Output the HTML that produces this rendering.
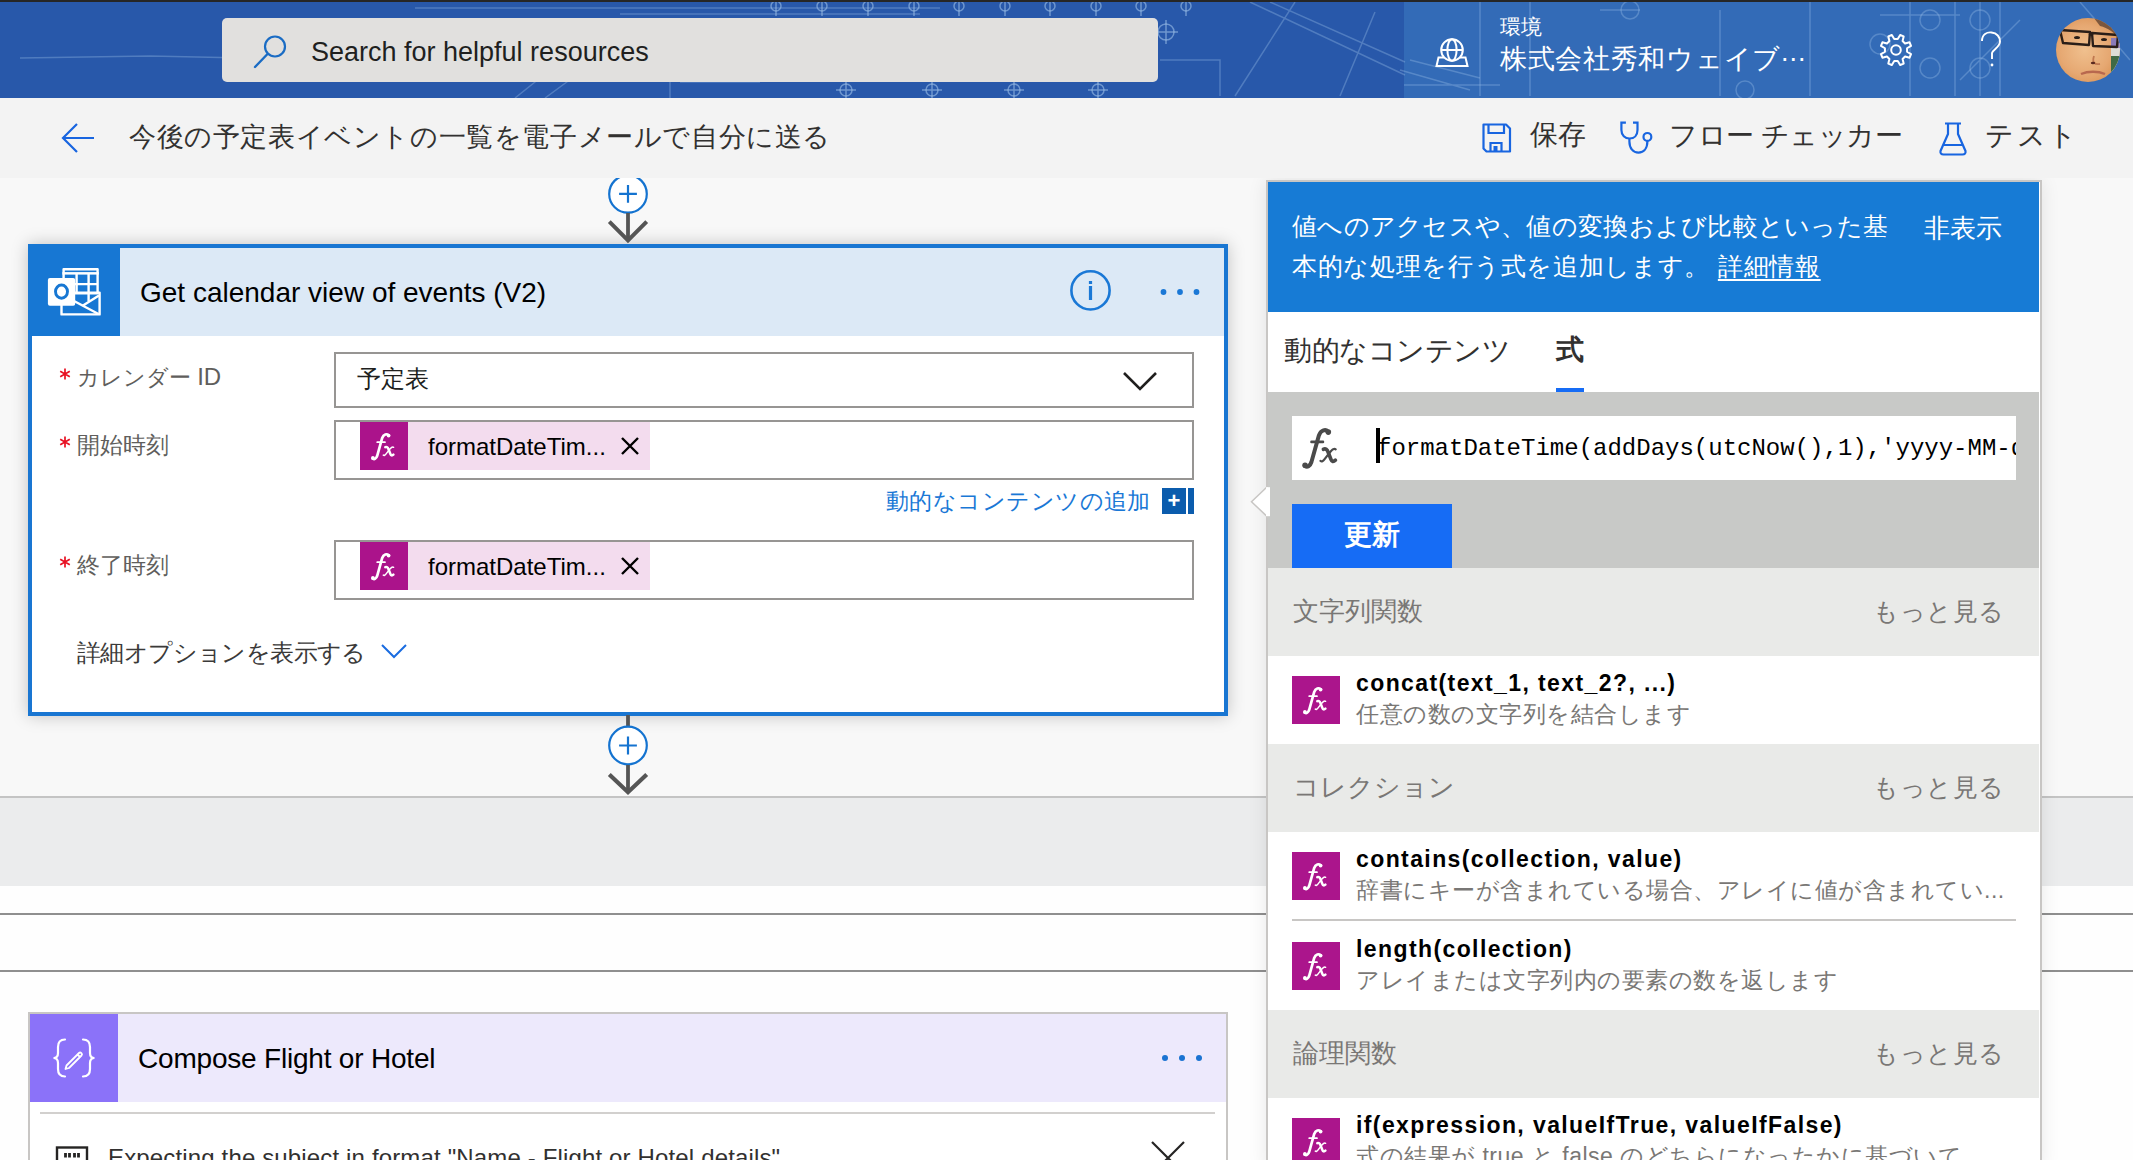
<!DOCTYPE html>
<html lang="ja">
<head>
<meta charset="utf-8">
<style>
*{box-sizing:border-box;margin:0;padding:0}
html,body{width:2133px;height:1160px;overflow:hidden;background:#f8f8f8;font-family:"Liberation Sans",sans-serif;color:#201f1e}
.a{position:absolute}
.t{position:absolute;white-space:nowrap;line-height:1}
svg{position:absolute;overflow:visible}
</style>
</head>
<body>
<svg width="0" height="0" style="position:absolute"><defs>
<symbol id="fx" viewBox="0 0 48 48"><g fill="none" stroke="currentColor" stroke-linecap="round">
<path d="M28.3 13.2 C27 11.6 23.6 11.8 22.2 16 L17.2 33.8 C16.2 36.8 14.4 37.6 12.8 36.6" stroke-width="2.7"/>
<path d="M17.2 20.2 H25" stroke-width="1.7"/>
<path d="M25.3 25.2 C26.8 24.6 27.9 25.4 28.4 27 L30.4 32 C31 33.6 32 33.9 33.4 32.6" stroke-width="2.5"/>
<path d="M33.6 25.3 C32.6 24.5 31.5 25.1 30 26.9 L26.1 31.9 C25.1 33.3 24.1 33.7 23.3 33.1" stroke-width="1.5"/>
</g><circle cx="28.6" cy="13.6" r="1.9" fill="currentColor"/><circle cx="12.9" cy="36" r="1.9" fill="currentColor"/></symbol>
</defs></svg>
<!-- ================= HEADER ================= -->
<div class="a" style="left:0;top:0;width:2133px;height:2px;background:#262626"></div>
<div class="a" id="hdr" style="left:0;top:2px;width:2133px;height:96px;background:#2858aa;overflow:hidden">
<svg style="left:0;top:0" width="2133" height="96" viewBox="0 2 2133 96">
  <rect x="1404" y="0" width="729" height="100" fill="#336bb7"/>
  <g stroke="#9cc0e8" stroke-opacity=".35" fill="none" stroke-width="1.5">
    <path d="M20 58 L150 56 L330 60"/>
    <path d="M415 8 H940 M620 14 H920"/>
    <path d="M515 98 L540 78 M545 98 L575 76 M670 98 V72 H860 M680 82 H760"/>
    <g stroke-opacity=".6">
      <circle cx="776" cy="6" r="5"/><circle cx="822" cy="6" r="5"/><circle cx="868" cy="6" r="5"/><circle cx="914" cy="6" r="5"/><circle cx="959" cy="6" r="5"/><circle cx="1005" cy="6" r="5"/><circle cx="1050" cy="6" r="5"/><circle cx="1096" cy="6" r="5"/><circle cx="1141" cy="6" r="5"/><circle cx="1186" cy="6" r="5"/>
      <circle cx="1166" cy="32" r="8"/><path d="M1166 20 V44 M1154 32 H1178"/><circle cx="846" cy="90" r="6"/><circle cx="932" cy="90" r="6"/><circle cx="1014" cy="90" r="6"/><circle cx="1098" cy="90" r="6"/><path d="M846 80 V98 M932 80 V98 M1014 80 V98 M1098 80 V98 M836 90 H856 M922 90 H942 M1004 90 H1024 M1088 90 H1108"/><path d="M776 2 V16 M822 2 V16 M868 2 V16 M914 2 V16 M959 2 V16 M1005 2 V16 M1050 2 V16 M1096 2 V16 M1141 2 V16 M1186 2 V16"/>
    </g>
    <path d="M1250 2 L1405 75 M1270 2 L1405 62 M1235 96 L1295 2 M1340 96 L1375 12 M1160 60 H1220 V96"/>
    <path d="M1480 2 V96 M1530 2 V96 M1600 10 H1640 M1720 10 V96 M1810 2 V96 M1880 15 H1960 M1910 2 V96 M1955 2 V96 M1980 2 V96 M2000 2 V96 M1960 80 L2020 20 M2080 2 L2130 60"/>
    <circle cx="1630" cy="10" r="9"/><circle cx="1930" cy="20" r="10"/><circle cx="1980" cy="20" r="10"/><circle cx="1930" cy="68" r="10"/><circle cx="1980" cy="68" r="10"/><circle cx="1880" cy="44" r="10"/><circle cx="1745" cy="90" r="9"/>
    <path d="M1400 70 L1470 90 M1410 60 L1480 78 M1404 85 H1500"/>
  </g>
</svg>
</div>
<!-- search -->
<div class="a" style="left:222px;top:18px;width:936px;height:64px;border-radius:5px;background:#e1e0de"></div>
<div class="t" style="left:311px;top:39px;font-size:27px;color:#201f1e">Search for helpful resources</div>
<svg style="left:250px;top:30px" width="40" height="42"><circle cx="25" cy="16.5" r="10" fill="none" stroke="#1a6cc4" stroke-width="2.2"/><path d="M17.5 24 L5 37" stroke="#1a6cc4" stroke-width="2.4" stroke-linecap="round"/></svg>
<svg style="left:1430px;top:30px" width="44" height="42"><circle cx="22" cy="20" r="10.8" fill="none" stroke="#fff" stroke-width="2"/><ellipse cx="22" cy="20" rx="4.6" ry="10.8" fill="none" stroke="#fff" stroke-width="2"/><path d="M11 20 H33" stroke="#fff" stroke-width="2"/><path d="M14 27.5 H8.5 L6.5 36 H37.5 L35.5 27.5 H30" fill="none" stroke="#fff" stroke-width="2"/></svg>
<div class="t" style="left:1500px;top:16px;font-size:21px;color:#fff">環境</div>
<div class="t" style="left:1500px;top:46px;font-size:27px;letter-spacing:.7px;color:#fff">株式会社秀和ウェイブ<span style="position:relative;top:-7px;letter-spacing:1px">...</span></div>
<svg style="left:1876px;top:30px" width="40" height="40" viewBox="-20 -20 40 40"><path id="gear" fill="none" stroke="#fff" stroke-width="2" stroke-linejoin="round" d="M1.75 -11.06 L4.17 -15.03 L7.68 -13.58 L6.58 -9.06 L9.06 -6.58 L13.58 -7.68 L15.03 -4.17 L11.06 -1.75 L11.06 1.75 L15.03 4.17 L13.58 7.68 L9.06 6.58 L6.58 9.06 L7.68 13.58 L4.17 15.03 L1.75 11.06 L-1.75 11.06 L-4.17 15.03 L-7.68 13.58 L-6.58 9.06 L-9.06 6.58 L-13.58 7.68 L-15.03 4.17 L-11.06 1.75 L-11.06 -1.75 L-15.03 -4.17 L-13.58 -7.68 L-9.06 -6.58 L-6.58 -9.06 L-7.68 -13.58 L-4.17 -15.03 L-1.75 -11.06 Z"/><circle cx="0" cy="0" r="4.8" fill="none" stroke="#fff" stroke-width="2"/></svg>
<svg style="left:1978px;top:32px" width="30" height="38"><path d="M4 9 C4 2 9 -0 13.5 0.5 C19 1 22 5 22 9.5 C22 15 15.5 17 14 21 V27" fill="none" stroke="#fff" stroke-width="1.9"/><circle cx="14" cy="33" r="1.4" fill="#fff"/></svg>
<!-- avatar -->
<svg style="left:2056px;top:18px" width="64" height="64" viewBox="0 0 64 64">
  <defs><clipPath id="av"><circle cx="32" cy="32" r="32"/></clipPath>
  <radialGradient id="sk" cx=".45" cy=".5" r=".65"><stop offset="0" stop-color="#f0c08e"/><stop offset=".6" stop-color="#e6a872"/><stop offset="1" stop-color="#d88f50"/></radialGradient></defs>
  <g clip-path="url(#av)">
    <rect width="64" height="64" fill="url(#sk)"/>
    <path d="M38 0 H64 V22 C58 14 52 10 44 8 Z" fill="#6a4a36" opacity=".85"/>
    <path d="M55 20 H64 V58 L55 58 Z" fill="#dcdcd6"/>
    <path d="M55 38 H64 V58 H55 Z" fill="#3f6a45"/>
    <path d="M55 20 H64 V30 H55 Z" fill="#8a7ab8"/>
    <path d="M4 12 L34 14 L33 27 L7 25 Z" fill="none" stroke="#2a1e18" stroke-width="2.4" stroke-linejoin="round"/>
    <path d="M36 15 L62 17 L61 29 L37 28 Z" fill="none" stroke="#2a1e18" stroke-width="2.4" stroke-linejoin="round"/>
    <path d="M33 16 L37 17 M0 12 L5 13" stroke="#2a1e18" stroke-width="2.2"/>
    <ellipse cx="21" cy="19.5" rx="3" ry="1.6" fill="#2a1e18"/><ellipse cx="48" cy="21.5" rx="3" ry="1.6" fill="#2a1e18"/>
    <path d="M38 38 C36 44 38 47 44 46" fill="none" stroke="#c07850" stroke-width="1.8"/>
    <ellipse cx="37" cy="45" rx="2.2" ry="1.2" fill="#5a2a20"/>
    <path d="M25 56 C32 53 42 53 49 56" fill="none" stroke="#b8684e" stroke-width="2.4"/>
  </g>
</svg>

<!-- ================= TOOLBAR ================= -->
<div class="a" style="left:0;top:98px;width:2133px;height:80px;background:#f3f3f3;z-index:5"></div>
<div class="t" style="left:129px;top:124px;font-size:27px;letter-spacing:.6px;color:#323130;z-index:6">今後の予定表イベントの一覧を電子メールで自分に送る</div>
<div class="t" style="left:1530px;top:121px;font-size:28px;color:#323130;z-index:6">保存</div>
<div class="t" style="left:1669px;top:122px;font-size:28px;letter-spacing:-.5px;color:#323130;z-index:6">フロー チェッカー</div>
<div class="t" style="left:1985px;top:122px;font-size:28px;letter-spacing:2.5px;color:#323130;z-index:6">テスト</div>
<svg style="left:60px;top:120px;z-index:6" width="38" height="36"><path d="M17 4 L3 18 L17 32 M3 18 H34" fill="none" stroke="#1865e0" stroke-width="2.2"/></svg>
<svg style="left:1480px;top:122px;z-index:6" width="34" height="34"><path d="M3.5 2.5 H26 L30 6.5 V29.5 H6.5 L3.5 26.5 Z" fill="none" stroke="#1865e0" stroke-width="2.2" stroke-linejoin="round"/><path d="M8.5 3 V11 H24 V3 M10.5 29 V21 H21.5 V29" fill="none" stroke="#1865e0" stroke-width="2.2"/><rect x="13.5" y="24" width="4" height="5" fill="#1865e0"/></svg>
<svg style="left:1617px;top:120px;z-index:6" width="40" height="38"><path d="M8.9 2.6 H4.4 V10 C4.4 15.2 8 18.5 12.6 18.5 C17.2 18.5 20.5 15.2 20.5 10 V2.6 H16" fill="none" stroke="#1865e0" stroke-width="2.2"/><path d="M12.4 18.5 V21.5 C12.4 28.4 16.2 32.6 21.5 32.6 C26.8 32.6 30.4 28.4 30.4 21" fill="none" stroke="#1865e0" stroke-width="2.2"/><circle cx="30.4" cy="16.9" r="3.9" fill="none" stroke="#1865e0" stroke-width="2.2"/></svg>
<svg style="left:1936px;top:120px;z-index:6" width="36" height="38"><path d="M9 3.5 H25 M12 3.5 V14 L4.5 31 Q4 34.5 7.5 34.5 H26.5 Q30 34.5 29.5 31 L22 14 V3.5 M8 25 H26" fill="none" stroke="#1865e0" stroke-width="2.2" stroke-linejoin="round"/></svg>

<!-- ================= CARD 1 ================= -->
<div class="a" style="left:28px;top:244px;width:1200px;height:472px;border:4px solid #1976d2;background:#fff;box-shadow:0 0 16px rgba(0,0,0,.22)"></div>
<div class="a" style="left:32px;top:248px;width:1192px;height:88px;background:#dce9f6"></div>
<div class="a" style="left:28px;top:244px;width:92px;height:92px;background:#1777d3"></div>
<div class="t" style="left:140px;top:279px;font-size:28px;color:#000">Get calendar view of events (V2)</div>
<!-- outlook icon -->
<svg style="left:28px;top:244px" width="92" height="92" viewBox="0 0 92 92">
  <g fill="none" stroke="#fff" stroke-width="2.4" stroke-linejoin="round">
    <rect x="35.6" y="25.2" width="34" height="24"/>
    <rect x="33.5" y="48.6" width="38.1" height="21.8"/>
    <path d="M48.6 30 V48 M60.6 30 V57 M35 40.1 H70"/>
    <path d="M46 57 L70.5 70 M55 61.5 L71 51.5"/>
  </g>
  <rect x="34.4" y="28.1" width="36.4" height="2.5" fill="#fff"/>
  <rect x="19.9" y="34" width="27.3" height="27.7" rx="2" fill="#fff"/>
  <ellipse cx="33.5" cy="47.6" rx="6" ry="6.6" fill="none" stroke="#1777d3" stroke-width="2.9"/>
</svg>
<!-- info & dots -->
<svg style="left:1068px;top:268px" width="44" height="44"><circle cx="22.5" cy="22.4" r="19.1" fill="none" stroke="#1a78d6" stroke-width="2.6"/><rect x="20.9" y="18" width="3.2" height="14" fill="#1a78d6"/><rect x="20.9" y="13" width="3.2" height="3" fill="#1a78d6"/></svg>
<svg style="left:1155px;top:285px" width="50" height="14"><circle cx="8.5" cy="7" r="2.9" fill="#1a78d6"/><circle cx="25" cy="7" r="2.9" fill="#1a78d6"/><circle cx="41.5" cy="7" r="2.9" fill="#1a78d6"/></svg>
<!-- row 1 -->
<svg style="left:58px;top:367px" width="14" height="14"><path d="M7 1.5 V12.5 M2.2 4.2 L11.8 9.8 M11.8 4.2 L2.2 9.8" stroke="#e81123" stroke-width="1.7"/></svg>
<div class="t" style="left:77px;top:365px;font-size:22px;color:#605e5c">カレンダー <span style="font-size:24px">ID</span></div>
<div class="a" style="left:334px;top:352px;width:860px;height:56px;border:2px solid #979593;background:#fff"></div>
<div class="t" style="left:357px;top:367px;font-size:24px;color:#201f1e">予定表</div>
<svg style="left:1122px;top:370px" width="36" height="22"><path d="M2 3 L18 19 L34 3" fill="none" stroke="#201f1e" stroke-width="2.6"/></svg>
<!-- row 2 -->
<svg style="left:58px;top:435px" width="14" height="14"><path d="M7 1.5 V12.5 M2.2 4.2 L11.8 9.8 M11.8 4.2 L2.2 9.8" stroke="#e81123" stroke-width="1.7"/></svg>
<div class="t" style="left:77px;top:434px;font-size:23px;color:#605e5c">開始時刻</div>
<div class="a" style="left:334px;top:420px;width:860px;height:60px;border:2px solid #979593;background:#fff"></div>
<div class="a" style="left:360px;top:422px;width:48px;height:48px;background:#ab138b"></div>
<svg style="left:360px;top:422px;color:#fff" width="48" height="48"><use href="#fx"/></svg>
<div class="a" style="left:408px;top:422px;width:242px;height:48px;background:#f3dcee"></div>
<div class="t" style="left:428px;top:435px;font-size:24px;color:#000">formatDateTim...</div>
<svg style="left:620px;top:436px" width="20" height="20"><path d="M2 2 L18 18 M18 2 L2 18" stroke="#000" stroke-width="2.4"/></svg>
<div class="t" style="left:886px;top:490px;font-size:23px;letter-spacing:.45px;color:#1a78d6">動的なコンテンツの追加</div>
<div class="a" style="left:1162px;top:488px;width:24px;height:26px;background:#0b5cad"></div>
<div class="a" style="left:1188px;top:488px;width:6px;height:26px;background:#0b5cad"></div>
<div class="t" style="left:1162px;top:490px;width:24px;text-align:center;font-size:22px;font-weight:bold;color:#fff">+</div>
<!-- row 3 -->
<svg style="left:58px;top:555px" width="14" height="14"><path d="M7 1.5 V12.5 M2.2 4.2 L11.8 9.8 M11.8 4.2 L2.2 9.8" stroke="#e81123" stroke-width="1.7"/></svg>
<div class="t" style="left:77px;top:554px;font-size:23px;color:#605e5c">終了時刻</div>
<div class="a" style="left:334px;top:540px;width:860px;height:60px;border:2px solid #979593;background:#fff"></div>
<div class="a" style="left:360px;top:542px;width:48px;height:48px;background:#ab138b"></div>
<svg style="left:360px;top:542px;color:#fff" width="48" height="48"><use href="#fx"/></svg>
<div class="a" style="left:408px;top:542px;width:242px;height:48px;background:#f3dcee"></div>
<div class="t" style="left:428px;top:555px;font-size:24px;color:#000">formatDateTim...</div>
<svg style="left:620px;top:556px" width="20" height="20"><path d="M2 2 L18 18 M18 2 L2 18" stroke="#000" stroke-width="2.4"/></svg>
<!-- advanced -->
<div class="t" style="left:77px;top:641px;font-size:24px;letter-spacing:-.6px;color:#3b3a39">詳細オプションを表示する</div>
<svg style="left:380px;top:643px" width="28" height="18"><path d="M2 2 L14 14 L26 2" fill="none" stroke="#1a6ce0" stroke-width="2"/></svg>

<!-- connectors -->
<svg style="left:600px;top:170px;z-index:4" width="56" height="76"><circle cx="28" cy="23.9" r="18.8" fill="#fff" stroke="#1473d0" stroke-width="2.2"/><path d="M28 15 V32.8 M19.1 23.9 H36.9" stroke="#1473d0" stroke-width="2.2"/><path d="M28 43 V69" fill="none" stroke="#555" stroke-width="3.8"/><path d="M9.3 51.6 L28 70.3 L46.7 51.6" fill="none" stroke="#555" stroke-width="4"/></svg>
<svg style="left:600px;top:715px" width="56" height="82"><path d="M28 0 V12" stroke="#555" stroke-width="3.8"/><circle cx="28" cy="30.5" r="18.8" fill="#fff" stroke="#1473d0" stroke-width="2.2"/><path d="M28 21.6 V39.4 M19.1 30.5 H36.9" stroke="#1473d0" stroke-width="2.2"/><path d="M28 50 V76" fill="none" stroke="#555" stroke-width="3.8"/><path d="M9.3 59.5 L28 77.2 L46.7 59.5" fill="none" stroke="#555" stroke-width="4.2"/></svg>

<!-- lower canvas bands -->
<div class="a" style="left:0;top:796px;width:2133px;height:2px;background:#c4c4c4"></div>
<div class="a" style="left:0;top:798px;width:2133px;height:88px;background:#ebeced"></div>
<div class="a" style="left:0;top:886px;width:2133px;height:274px;background:#fefefe"></div>
<div class="a" style="left:0;top:913px;width:2133px;height:2px;background:#8f8f8f"></div>
<div class="a" style="left:0;top:970px;width:2133px;height:2px;background:#8f8f8f"></div>

<!-- compose card -->
<div class="a" style="left:28px;top:1012px;width:1200px;height:160px;border:2px solid #c8c6c4;background:#fff"></div>
<div class="a" style="left:30px;top:1014px;width:1196px;height:88px;background:#ede9fc"></div>
<div class="a" style="left:30px;top:1014px;width:88px;height:88px;background:#8b72f9"></div>
<div class="t" style="left:138px;top:1045px;font-size:28px;letter-spacing:-.2px;color:#000">Compose Flight or Hotel</div>
<svg style="left:30px;top:1014px" width="88" height="88"><g fill="none" stroke="#fff" stroke-width="2.2" stroke-linecap="round">
<path d="M35 25.5 C29 25.5 28 29 28 33 V39 C28 42 26.5 44 23.5 44 C26.5 44 28 46 28 49 V55 C28 59 29 62.5 35 62.5"/>
<path d="M53 25.5 C59 25.5 60 29 60 33 V39 C60 42 61.5 44 64.5 44 C61.5 44 60 46 60 49 V55 C60 59 59 62.5 53 62.5"/>
</g><g fill="none" stroke="#fff" stroke-width="1.8" stroke-linejoin="round"><path d="M36.5 51.5 L49 39 C50.5 37.5 53 40 51.5 41.5 L39 54 L35.5 55 Z M47.5 40.5 L50 43"/></g></svg>
<svg style="left:54px;top:1145px" width="36" height="20"><rect x="3" y="2.5" width="30" height="30" fill="none" stroke="#252423" stroke-width="2.4"/><path d="M11.5 8 V12.5 M15.5 8 V12.5 M20.5 8 V12.5 M24.5 8 V12.5" stroke="#252423" stroke-width="2.8"/></svg>
<svg style="left:1150px;top:1140px" width="36" height="36"><path d="M2 2 L34 34 M34 2 L2 34" fill="none" stroke="#252423" stroke-width="2.2"/></svg>
<svg style="left:1157px;top:1051px" width="50" height="14"><circle cx="8" cy="7" r="3" fill="#1a73d2"/><circle cx="25" cy="7" r="3" fill="#1a73d2"/><circle cx="42" cy="7" r="3" fill="#1a73d2"/></svg>
<div class="a" style="left:40px;top:1112px;width:1175px;height:2px;background:#d2d0ce"></div>
<div class="t" style="left:108px;top:1146px;font-size:24px;letter-spacing:.15px;color:#323130">Expecting the subject in format "Name - Flight or Hotel details"</div>

<!-- ================= PANEL ================= -->
<div class="a" style="left:1266px;top:180px;width:776px;height:990px;border:2px solid #c8c6c4;background:#fff;box-shadow:0 0 18px rgba(0,0,0,.09)"></div>
<div class="a" style="left:1268px;top:182px;width:771px;height:130px;background:#177bd5"></div>
<div class="t" style="left:1292px;top:214px;font-size:25px;letter-spacing:.27px;color:#fff">値へのアクセスや、値の変換および比較といった基</div>
<div class="t" style="left:1292px;top:254px;font-size:25px;letter-spacing:.7px;color:#fff">本的な処理を行う式を追加します。 <span style="text-decoration:underline;text-underline-offset:4px">詳細情報</span></div>
<div class="t" style="left:1924px;top:215px;font-size:26px;color:#fff">非表示</div>
<!-- tabs -->
<div class="t" style="left:1284px;top:337px;font-size:28px;letter-spacing:-.5px;color:#323130">動的なコンテンツ</div>
<div class="t" style="left:1556px;top:336px;font-size:28px;color:#323130;font-weight:bold">式</div>
<div class="a" style="left:1556px;top:388px;width:28px;height:4px;background:#166cf5"></div>
<!-- gray expr area -->
<div class="a" style="left:1268px;top:392px;width:771px;height:176px;background:#c8c9c7"></div>
<div class="a" style="left:1292px;top:416px;width:724px;height:64px;background:#fff;overflow:hidden">
  <div class="t" style="left:85px;top:20.5px;font-family:'Liberation Mono',monospace;font-size:24px;color:#000">formatDateTime(addDays(utcNow(),1),'yyyy-MM-dd')</div>
  <div class="a" style="left:84px;top:12px;width:4px;height:35px;background:#000"></div>
  <svg style="left:-6px;top:-4px;color:#4a4a4a" width="71" height="71" viewBox="0 0 48 48"><use href="#fx"/></svg>
</div>
<div class="a" style="left:1292px;top:504px;width:160px;height:64px;background:#166cf5"></div>
<div class="t" style="left:1292px;top:521px;width:160px;text-align:center;font-size:28px;font-weight:bold;color:#fff">更新</div>
<!-- pointer -->
<svg style="left:1250px;top:486px;z-index:3" width="20" height="32"><path d="M18 0 L1.5 15.7 L18 31.4" fill="#fff" stroke="#c8c6c4" stroke-width="1.5"/><rect x="16" y="1.2" width="4" height="29" fill="#fff"/></svg>
<!-- sections -->
<div class="a" style="left:1268px;top:568px;width:771px;height:88px;background:#e9eae8"></div>
<div class="t" style="left:1293px;top:598px;font-size:26px;color:#797775">文字列関数</div>
<div class="t" style="left:1873px;top:599px;font-size:25px;letter-spacing:.5px;color:#797775">もっと見る</div>
<div class="a" style="left:1292px;top:676px;width:48px;height:48px;background:#ab158c"></div>
<svg style="left:1292px;top:676px;color:#fff" width="48" height="48"><use href="#fx"/></svg>
<div class="t" style="left:1356px;top:672px;font-size:23px;font-weight:bold;letter-spacing:1.4px;color:#000">concat(text_1, text_2?, ...)</div>
<div class="t" style="left:1356px;top:703px;font-size:23px;letter-spacing:.5px;color:#797775">任意の数の文字列を結合します</div>

<div class="a" style="left:1268px;top:744px;width:771px;height:88px;background:#e9eae8"></div>
<div class="t" style="left:1293px;top:774px;font-size:26px;color:#797775">コレクション</div>
<div class="t" style="left:1873px;top:775px;font-size:25px;letter-spacing:.5px;color:#797775">もっと見る</div>
<div class="a" style="left:1292px;top:852px;width:48px;height:48px;background:#ab158c"></div>
<svg style="left:1292px;top:852px;color:#fff" width="48" height="48"><use href="#fx"/></svg>
<div class="t" style="left:1356px;top:848px;font-size:23px;font-weight:bold;letter-spacing:1.4px;color:#000">contains(collection, value)</div>
<div class="t" style="left:1356px;top:879px;font-size:23px;letter-spacing:.5px;color:#797775">辞書にキーが含まれている場合、アレイに値が含まれてい...</div>
<div class="a" style="left:1292px;top:919px;width:724px;height:2px;background:#c8c6c4"></div>
<div class="a" style="left:1292px;top:942px;width:48px;height:48px;background:#ab158c"></div>
<svg style="left:1292px;top:942px;color:#fff" width="48" height="48"><use href="#fx"/></svg>
<div class="t" style="left:1356px;top:938px;font-size:23px;font-weight:bold;letter-spacing:1.4px;color:#000">length(collection)</div>
<div class="t" style="left:1356px;top:969px;font-size:23px;letter-spacing:.5px;color:#797775">アレイまたは文字列内の要素の数を返します</div>

<div class="a" style="left:1268px;top:1010px;width:771px;height:88px;background:#e9eae8"></div>
<div class="t" style="left:1293px;top:1040px;font-size:26px;color:#797775">論理関数</div>
<div class="t" style="left:1873px;top:1041px;font-size:25px;letter-spacing:.5px;color:#797775">もっと見る</div>
<div class="a" style="left:1292px;top:1118px;width:48px;height:48px;background:#ab158c"></div>
<svg style="left:1292px;top:1118px;color:#fff" width="48" height="48"><use href="#fx"/></svg>
<div class="t" style="left:1356px;top:1114px;font-size:23px;font-weight:bold;letter-spacing:1.4px;color:#000">if(expression, valueIfTrue, valueIfFalse)</div>
<div class="t" style="left:1356px;top:1145px;font-size:23px;letter-spacing:.5px;color:#797775">式の結果が true と false のどちらになったかに基づいて</div>

</body>
</html>
